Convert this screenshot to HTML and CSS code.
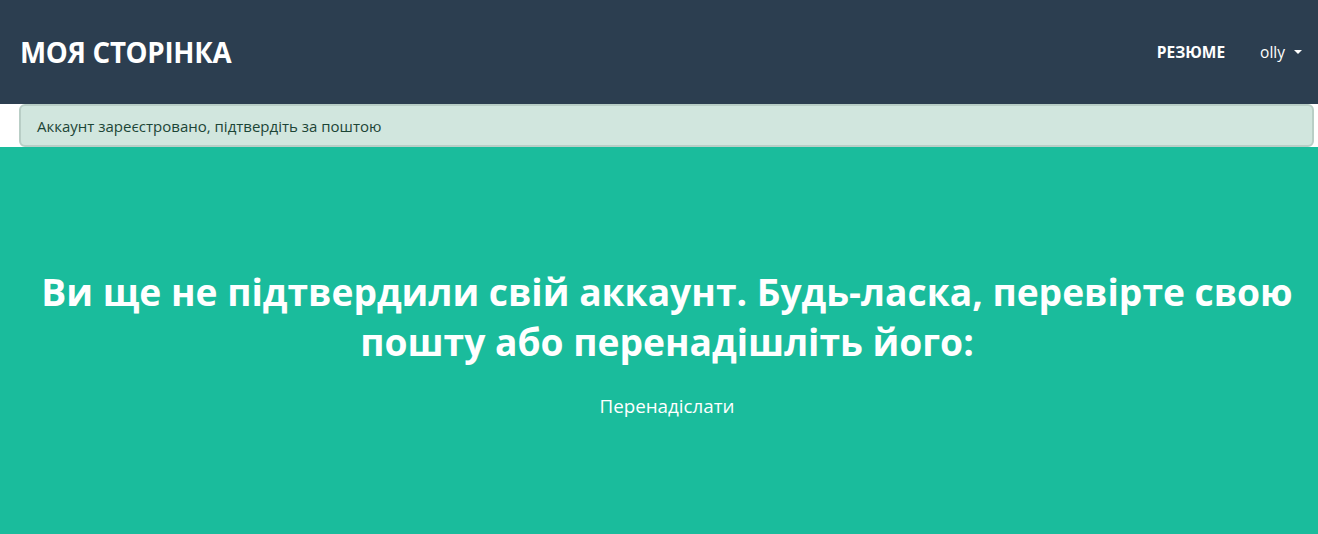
FILE: index.html
```html
<!DOCTYPE html>
<html lang="uk">
<head>
<meta charset="utf-8">
<title>Моя сторінка</title>
<link rel="stylesheet" href="styles.css">
</head>
<body>
<nav class="navbar">
  <a class="brand" href="#">МОЯ СТОРІНКА</a>
  <ul class="nav-links">
    <li><a class="nav-link bold" href="#">РЕЗЮМЕ</a></li>
    <li><a class="nav-link user" href="#">olly<span class="caret"></span></a></li>
  </ul>
</nav>
<div class="alert">Аккаунт зареєстровано, підтвердіть за поштою</div>
<header class="masthead">
  <h2 class="title">Ви ще не підтвердили свій аккаунт. Будь-ласка, перевірте свою пошту або перенадішліть його:</h2>
  <a class="resend" href="#">Перенадіслати</a>
</header>
</body>
</html>
```
FILE: styles.css
```css
* { box-sizing: border-box; }
html, body { margin: 0; padding: 0; }
body {
  font-family: "Open Sans", "Noto Sans", sans-serif;
  background: #fff;
  color: #212529;
  height: 534px;
  overflow: hidden;
}
.navbar {
  height: 104px;
  background: #2c3e50;
  display: flex;
  align-items: center;
  justify-content: space-between;
  padding: 0 16px 0 20px;
}
.brand {
  color: #fff;
  text-decoration: none;
  font-weight: 700;
  font-size: 27.7px;
  letter-spacing: -0.3px;
}
.nav-links {
  list-style: none;
  margin: 0;
  padding: 0;
  display: flex;
  align-items: center;
  gap: 35px;
}
.nav-link {
  color: #fff;
  text-decoration: none;
  font-size: 15.5px;
  display: flex;
  align-items: center;
}
.nav-link.bold { font-weight: 700; font-size: 15.5px; }
.caret {
  display: inline-block;
  margin-left: 9px;
  width: 0;
  height: 0;
  border-left: 4px solid transparent;
  border-right: 4px solid transparent;
  border-top: 4px solid #fff;
}
.alert {
  margin: 0 4px 0 19px;
  height: 43px;
  background: #d1e6de;
  border: 2px solid #b9cec6;
  border-radius: 6px;
  color: #1c4536;
  font-size: 15px;
  display: flex;
  align-items: center;
  padding: 0 16px;
}
.masthead {
  background: #1abc9c;
  height: 387px;
  text-align: center;
  padding: 120px 4px 0 20px;
  color: #fff;
  font-size: 18.8px;
  line-height: 26px;
}
.title {
  margin: 0 0 26px;
  font-size: 37.2px;
  font-weight: 700;
  line-height: 50px;
}
.resend {
  display: inline-block;
  color: #fff;
  text-decoration: none;
  font-size: 18.8px;
  line-height: 26px;
}
```
